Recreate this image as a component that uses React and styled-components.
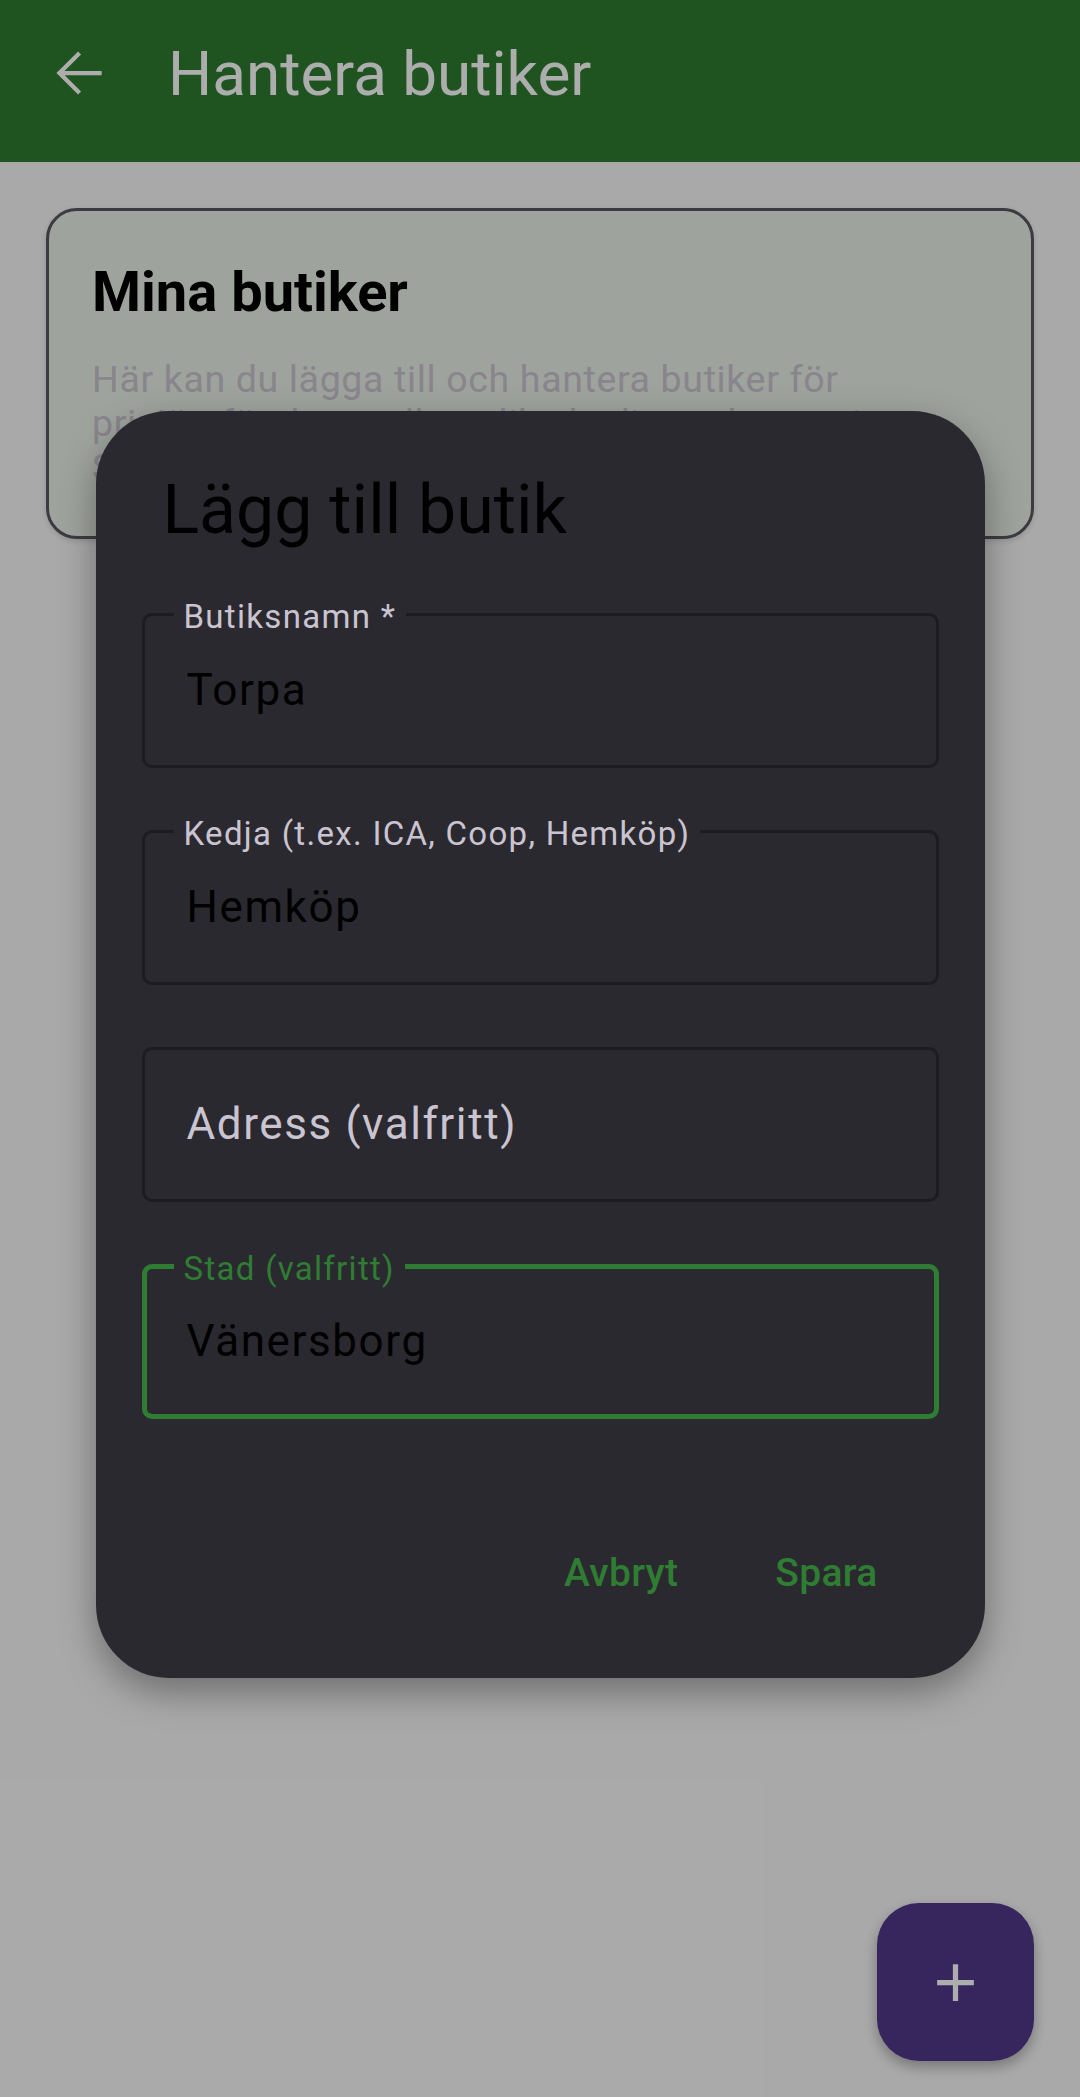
import styled, { createGlobalStyle } from "styled-components";

const GlobalStyle = createGlobalStyle`
    html, body {
        margin: 0;
        padding: 0;
    }
    body {
        font-family: Roboto, "Noto Sans", "Liberation Sans", sans-serif;
    }
`;

const Screen = styled.div`
    position: relative;
    width: 1080px;
    height: 2097px;
    overflow: hidden;
    background: #fafafa;
`;

const AppBar = styled.header`
    height: 162px;
    box-sizing: border-box;
    padding: 0 0 16px 45px;
    background: #2e7d32;
    display: flex;
    align-items: center;
`;

const NavButton = styled.button`
    width: 68px;
    height: 68px;
    padding: 0;
    border: none;
    background: none;
    display: flex;
    svg {
        width: 68px;
        height: 68px;
        fill: none;
        stroke: #ffffff;
        stroke-width: 1.5;
    }
`;

const AppTitle = styled.h1`
    margin: 0 0 0 55px;
    font-size: 62px;
    font-weight: 400;
    color: #ffffff;
`;

const Content = styled.main`
    padding: 46px;
`;

const InfoCard = styled.section`
    border: 3px solid #5a5860;
    border-radius: 31px;
    background: #eaf1e7;
    padding: 45px 43px 47px;
    box-shadow: 0 2px 6px rgba(0, 0, 0, 0.15);
`;

const CardTitle = styled.h2`
    margin: 0;
    font-size: 56px;
    line-height: 73.5px;
    font-weight: 700;
    color: #000;
`;

const CardText = styled.p`
    margin: 27px 0 0;
    font-size: 37.5px;
    line-height: 44px;
    letter-spacing: 0.65px;
    color: #cac4d0;
`;

const Fab = styled.button`
    position: absolute;
    right: 46px;
    bottom: 36px;
    width: 157px;
    height: 158px;
    border: none;
    border-radius: 42px;
    background: #51378a;
    box-shadow: 0 6px 14px rgba(0, 0, 0, 0.3);
    display: flex;
    align-items: center;
    justify-content: center;
    svg {
        width: 63px;
        height: 63px;
        fill: #ffffff;
    }
`;

const Scrim = styled.div`
    position: absolute;
    inset: 0;
    background: rgba(0, 0, 0, 0.32);
    display: flex;
    align-items: center;
    justify-content: center;
    padding-bottom: 8px;
    box-sizing: border-box;
`;

const Dialog = styled.div`
    width: 889px;
    box-sizing: border-box;
    background: #2b2930;
    border-radius: 73px;
    padding: 57px 46px 53px;
    box-shadow: 0 14px 36px rgba(0, 0, 0, 0.35);
    display: flex;
    flex-direction: column;
`;

const DialogTitle = styled.h2`
    margin: 0 0 61px 21px;
    font-size: 68px;
    line-height: 84px;
    font-weight: 400;
    color: #000;
`;

const FieldList = styled.div`
    display: flex;
    flex-direction: column;
    gap: 62px;
`;

const FieldBox = styled.div`
    position: relative;
    height: 155px;
    box-sizing: border-box;
    border: ${p => (p.$focused ? "5px solid #2e7d32" : "3px solid #1d1c21")};
    border-radius: 10px;
    padding: 0 ${p => (p.$focused ? 40 : 42)}px;
    display: flex;
    align-items: center;
`;

const FieldLabel = styled.span`
    position: absolute;
    top: ${p => (p.$focused ? -21.5 : -20.5)}px;
    left: ${p => (p.$focused ? 27 : 29)}px;
    padding: 0 10px;
    background: #2b2930;
    font-size: 33px;
    line-height: 42px;
    letter-spacing: 1.3px;
    color: ${p => (p.$focused ? "#2e7d32" : "#cac4d0")};
`;

const FieldValue = styled.span`
    font-size: 44px;
    line-height: 63px;
    letter-spacing: 1.6px;
    color: ${p => (p.$placeholder ? "#cac4d0" : "#000")};
`;

const ButtonRow = styled.div`
    margin-top: 101px;
    padding-right: 29px;
    display: flex;
    justify-content: flex-end;
    gap: 33px;
`;

const TextButton = styled.button`
    height: 105px;
    padding: 0 32px;
    border: none;
    background: none;
    font-family: inherit;
    font-size: 39px;
    font-weight: 500;
    letter-spacing: 0.3px;
    color: #2e7d32;
`;

const Field = ({ label, value, placeholder, focused }) => (
    <FieldBox $focused={focused}>
        {label && <FieldLabel $focused={focused}>{label}</FieldLabel>}
        {value
            ? <FieldValue>{value}</FieldValue>
            : <FieldValue $placeholder>{placeholder}</FieldValue>}
    </FieldBox>
);

const App = () => {
    return (
        <Screen>
            <GlobalStyle />
            <AppBar>
                <NavButton aria-label="Tillbaka">
                    <svg viewBox="0 0 24 24">
                        <path d="M20 12H5.2M12.2 4.9L5.1 12l7.1 7.1" />
                    </svg>
                </NavButton>
                <AppTitle>Hantera butiker</AppTitle>
            </AppBar>
            <Content>
                <InfoCard>
                    <CardTitle>Mina butiker</CardTitle>
                    <CardText>
                        Här kan du lägga till och hantera butiker för prisjämförelse mellan olika kedjor och orter i Sverige.
                    </CardText>
                </InfoCard>
            </Content>
            <Fab aria-label="Lägg till">
                <svg viewBox="0 0 24 24">
                    <path d="M11 5h2v6h6v2h-6v6h-2v-6H5v-2h6z" />
                </svg>
            </Fab>
            <Scrim>
                <Dialog>
                    <DialogTitle>Lägg till butik</DialogTitle>
                    <FieldList>
                        <Field label="Butiksnamn *" value="Torpa" />
                        <Field label="Kedja (t.ex. ICA, Coop, Hemköp)" value="Hemköp" />
                        <Field placeholder="Adress (valfritt)" />
                        <Field label="Stad (valfritt)" value="Vänersborg" focused />
                    </FieldList>
                    <ButtonRow>
                        <TextButton>Avbryt</TextButton>
                        <TextButton>Spara</TextButton>
                    </ButtonRow>
                </Dialog>
            </Scrim>
        </Screen>
    );
};

export default App;
